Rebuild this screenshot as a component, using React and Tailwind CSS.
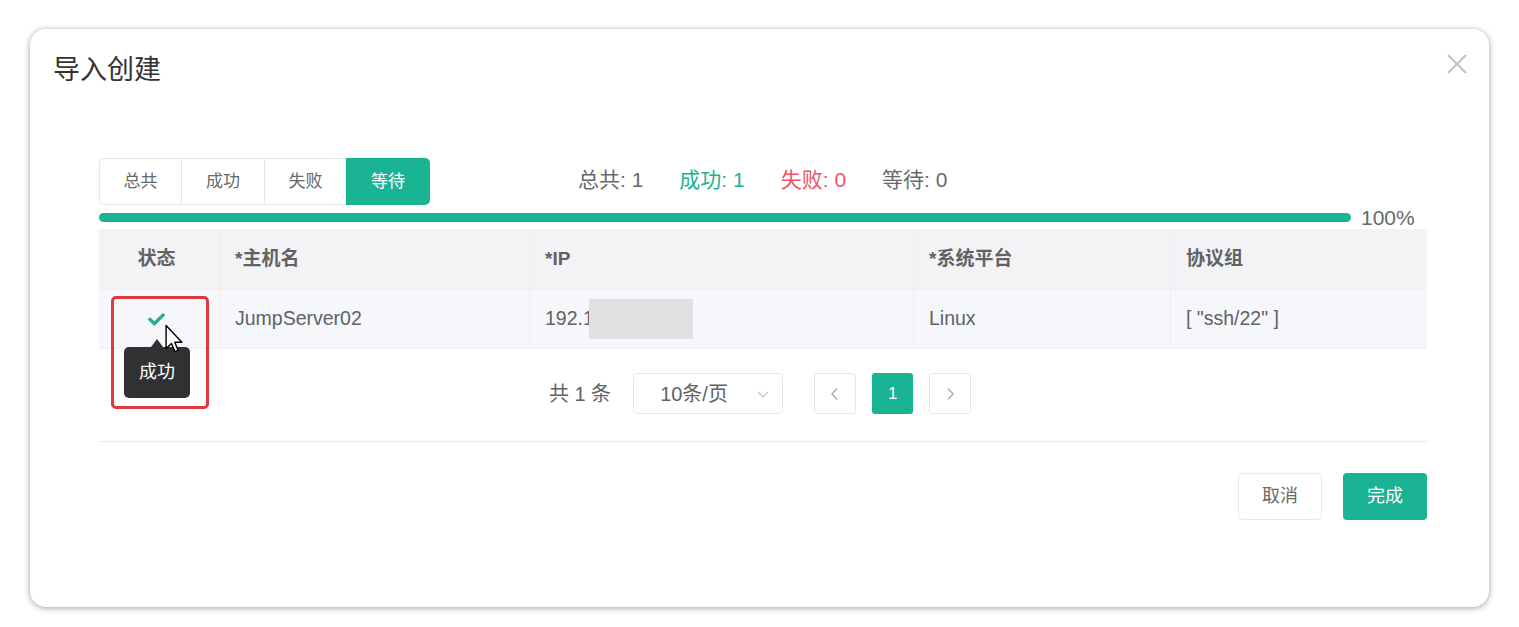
import React from "react";

const FONT = { fontFamily: '"Liberation Sans", Arial, "Noto Sans CJK SC", sans-serif' };

function Check() {
  return (
    <svg width="17" height="13" viewBox="0 0 512 384" className="block">
      <path fill="#1ab394" d="M173.9 374.6L7.5 208.2c-10-10-10-26.2 0-36.2l36.2-36.2c10-10 26.2-10 36.2 0L192 247.9 432.1 7.8c10-10 26.2-10 36.2 0l36.2 36.2c10 10 10 26.2 0 36.2L210.1 374.6c-10 10-26.2 10-36.2 0z" />
    </svg>
  );
}

function Cursor() {
  return (
    <svg width="24" height="30" viewBox="0 0 12 19" className="block">
      <path d="M1 1 L1 15.5 L4.4 12.3 L6.6 17.5 L8.6 16.6 L6.5 11.6 L11 11.6 Z" fill="#fff" stroke="#000" strokeWidth="0.9" strokeLinejoin="round" />
    </svg>
  );
}

export default function App() {
  const cols = ["w-[121px]", "w-[310px]", "w-[384px]", "w-[257px]", "flex-1"];
  return (
    <div className="w-[1519px] h-[627px] bg-white pt-[29px] pl-[30px] text-[#676a6c]" style={FONT}>
      <div className="relative w-[1459px] h-[578px] bg-white rounded-[16px] shadow-[0_1px_6px_rgba(0,0,0,0.38)]">
        <div className="h-[82px] flex items-center px-[23px]">
          <span className="text-[27px] text-[#333]">导入创建</span>
        </div>
        <svg className="absolute left-[1416px] top-[24px]" width="22" height="22" viewBox="0 0 22 22">
          <path d="M2 2 L20 20 M20 2 L2 20" stroke="#c4c4c4" strokeWidth="2.2" />
        </svg>

        <div className="pl-[69px] pr-[62px] pt-[47px]">
          <div className="flex items-center">
            <div className="flex h-[47px] w-[331px] text-[17px]">
              <div className="w-[83px] flex items-center justify-center border border-[#e5e6e7] rounded-l-[5px] text-[#676a6c]">总共</div>
              <div className="w-[83px] flex items-center justify-center border-y border-r border-[#e5e6e7] text-[#676a6c]">成功</div>
              <div className="w-[81px] flex items-center justify-center border-y border-[#e5e6e7] text-[#676a6c]">失败</div>
              <div className="w-[84px] flex items-center justify-center bg-[#1ab394] rounded-r-[5px] text-white">等待</div>
            </div>
            <div className="flex items-center gap-[36px] ml-[148px] text-[21px] -mt-[3px]">
              <span className="text-[#676a6c]">总共: 1</span>
              <span className="text-[#1ab394]">成功: 1</span>
              <span className="text-[#ed5565]">失败: 0</span>
              <span className="text-[#676a6c]">等待: 0</span>
            </div>
          </div>

          <div className="h-[24px] flex items-center">
            <div className="w-[1252px] h-[9px] rounded-full bg-[#1ab394]" />
            <span className="ml-[10px] text-[21px] text-[#676a6c] leading-none">100%</span>
          </div>

          <div className="w-[1328px]">
            <div className="flex h-[61px] bg-[#f3f3f5] text-[19px] font-bold text-[#606266] border-b border-[#ebeef5]">
              <div className={`${cols[0]} flex items-center justify-center pr-[5px] border-r border-[#ebeef5]`}>状态</div>
              <div className={`${cols[1]} flex items-center px-[15px] border-r border-[#ebeef5]`}>*主机名</div>
              <div className={`${cols[2]} flex items-center px-[15px] border-r border-[#ebeef5]`}>*IP</div>
              <div className={`${cols[3]} flex items-center px-[15px] border-r border-[#ebeef5]`}>*系统平台</div>
              <div className={`${cols[4]} flex items-center px-[15px]`}>协议组</div>
            </div>
            <div className="flex h-[59px] bg-[#f5f7fa] text-[19.5px] text-[#606266] border-b border-[#ebeef5]">
              <div className={`${cols[0]} relative flex items-center justify-center pr-[5px] border-r border-[#ebeef5]`}>
                <Check />
                <div className="absolute left-[12px] top-[6px] w-[98px] h-[113px] border-[3px] border-[#e0393e] rounded-[5px] z-10" />
                <div className="absolute left-[25px] top-[57px] w-[66px] h-[51px] rounded-[5px] bg-[#303133] flex items-center justify-center text-white text-[18px] z-20">
                  成功
                  <div className="absolute left-[27px] -top-[8px] w-0 h-0 border-l-[6px] border-r-[6px] border-b-[8px] border-l-transparent border-r-transparent border-b-[#303133]" />
                </div>
                <div className="absolute left-[63px] top-[34px] z-30">
                  <Cursor />
                </div>
              </div>
              <div className={`${cols[1]} flex items-center px-[15px] border-r border-[#ebeef5]`}>JumpServer02</div>
              <div className={`${cols[2]} flex items-center px-[15px] border-r border-[#ebeef5]`}>
                <span>192.1</span>
                <div className="-ml-[5px] w-[104px] h-[40px] bg-[#e1e1e4]" />
              </div>
              <div className={`${cols[3]} flex items-center px-[15px] border-r border-[#ebeef5]`}>Linux</div>
              <div className={`${cols[4]} flex items-center px-[15px]`}>[ "ssh/22" ]</div>
            </div>

            <div className="flex items-center justify-center h-[41px] mt-[24px] text-[20px] text-[#606266]">
              <div className="flex items-center ml-[-6px]">
                <span>共 1 条</span>
                <div className="ml-[22px] w-[150px] h-[41px] border border-[#e4e7ed] rounded-[4px] flex items-center pl-[26px] pr-[12px] justify-between">
                  <span className="text-[20px]">10条/页</span>
                  <svg width="14" height="14" viewBox="0 0 14 14"><path d="M2 5 L7 10 L12 5" fill="none" stroke="#c0c4cc" strokeWidth="1.2" /></svg>
                </div>
                <div className="ml-[31px] w-[42px] h-[41px] border border-[#e4e7ed] rounded-[3px] flex items-center justify-center">
                  <svg width="10" height="14" viewBox="0 0 10 14"><path d="M7 1.5 L2 7 L7 12.5" fill="none" stroke="#a8abb2" strokeWidth="1.4" /></svg>
                </div>
                <div className="ml-[16px] w-[41px] h-[41px] rounded-[3px] bg-[#1ab394] text-white text-[17px] flex items-center justify-center">1</div>
                <div className="ml-[16px] w-[42px] h-[41px] border border-[#e4e7ed] rounded-[3px] flex items-center justify-center">
                  <svg width="10" height="14" viewBox="0 0 10 14"><path d="M3 1.5 L8 7 L3 12.5" fill="none" stroke="#a8abb2" strokeWidth="1.4" /></svg>
                </div>
              </div>
            </div>

            <div className="mt-[27px] border-t border-[#e7eaec]" />

            <div className="flex justify-end gap-[21px] mt-[31px]">
              <div className="w-[84px] h-[47px] border border-[#e7eaec] rounded-[4px] flex items-center justify-center text-[18px] text-[#676a6c]">取消</div>
              <div className="w-[84px] h-[47px] bg-[#1ab394] rounded-[4px] flex items-center justify-center text-[18px] text-white">完成</div>
            </div>
          </div>
        </div>
      </div>
    </div>
  );
}
